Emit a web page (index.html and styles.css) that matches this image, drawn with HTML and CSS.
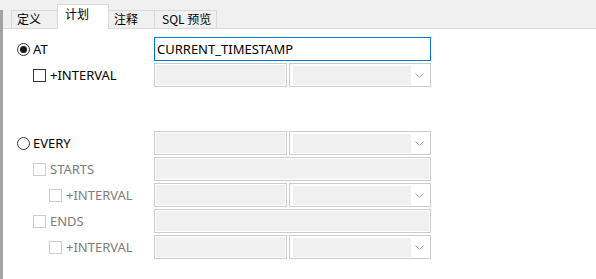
FILE: index.html
```html
<!DOCTYPE html>
<html lang="zh">
<head>
    <meta charset="UTF-8">
    <title>计划</title>
    <link rel="stylesheet" href="styles.css">
</head>
<body>
    <div class="window">
        <div class="edge"></div>
        <div class="main">
            <div class="tabs">
                <div class="tab tab-def">定义</div>
                <div class="tab tab-plan active">计划</div>
                <div class="tab tab-note">注释</div>
                <div class="tab tab-sql">SQL 预览</div>
            </div>

            <div class="form">
                <!-- AT -->
                <div class="row">
                    <div class="opt"><span class="radio checked"></span>AT</div>
                    <div class="fields">
                        <div class="text-box focused">CURRENT_TIMESTAMP</div>
                    </div>
                </div>
                <div class="row">
                    <div class="opt level1"><span class="check"></span>+INTERVAL</div>
                    <div class="fields">
                        <div class="input-off half"></div>
                        <div class="combo">
                            <div class="combo-fill"></div>
                            <div class="combo-arrow">
                                <svg width="9" height="5" viewBox="0 0 9 5"><path d="M0.5 0.5 L4.5 4.5 L8.5 0.5" fill="none" stroke="#a6a6a6" stroke-width="1"/></svg>
                            </div>
                        </div>
                    </div>
                </div>

                <!-- EVERY -->
                <div class="row section-gap">
                    <div class="opt"><span class="radio"></span>EVERY</div>
                    <div class="fields">
                        <div class="input-off half"></div>
                        <div class="combo">
                            <div class="combo-fill"></div>
                            <div class="combo-arrow">
                                <svg width="9" height="5" viewBox="0 0 9 5"><path d="M0.5 0.5 L4.5 4.5 L8.5 0.5" fill="none" stroke="#a6a6a6" stroke-width="1"/></svg>
                            </div>
                        </div>
                    </div>
                </div>
                <div class="row">
                    <div class="opt level1 disabled"><span class="check"></span>STARTS</div>
                    <div class="fields">
                        <div class="input-off full"></div>
                    </div>
                </div>
                <div class="row">
                    <div class="opt level2 disabled"><span class="check"></span>+INTERVAL</div>
                    <div class="fields">
                        <div class="input-off half"></div>
                        <div class="combo">
                            <div class="combo-fill"></div>
                            <div class="combo-arrow">
                                <svg width="9" height="5" viewBox="0 0 9 5"><path d="M0.5 0.5 L4.5 4.5 L8.5 0.5" fill="none" stroke="#a6a6a6" stroke-width="1"/></svg>
                            </div>
                        </div>
                    </div>
                </div>
                <div class="row">
                    <div class="opt level1 disabled"><span class="check"></span>ENDS</div>
                    <div class="fields">
                        <div class="input-off full"></div>
                    </div>
                </div>
                <div class="row">
                    <div class="opt level2 disabled"><span class="check"></span>+INTERVAL</div>
                    <div class="fields">
                        <div class="input-off half"></div>
                        <div class="combo">
                            <div class="combo-fill"></div>
                            <div class="combo-arrow">
                                <svg width="9" height="5" viewBox="0 0 9 5"><path d="M0.5 0.5 L4.5 4.5 L8.5 0.5" fill="none" stroke="#a6a6a6" stroke-width="1"/></svg>
                            </div>
                        </div>
                    </div>
                </div>
            </div>
        </div>
    </div>
</body>
</html>
```

FILE: styles.css
```css
* {
    box-sizing: border-box;
}
body {
    margin: 0;
    background: #fff;
    font-family: "Noto Sans", "Noto Sans CJK SC", sans-serif;
    font-size: 12px;
    color: #000;
}
.window {
    display: flex;
    width: 596px;
    height: 279px;
    overflow: hidden;
}
.edge {
    width: 3px;
    flex: none;
    background: linear-gradient(#f0f0f0 10px, #a3a3a3 10px);
}
.main {
    flex: 1;
}

/* tab strip */
.tabs {
    display: flex;
    align-items: flex-end;
    height: 29px;
    padding-left: 8px;
    background: #f0f0f0;
    border-bottom: 1px solid #d9d9d9;
}
.tab {
    height: 18px;
    line-height: 16px;
    padding-left: 5px;
    border: 1px solid #d9d9d9;
    border-bottom: none;
    background: #f0f0f0;
    white-space: nowrap;
    font-family: "Noto Sans CJK SC", sans-serif;
}
.tab + .tab {
    margin-left: -1px;
}
.tab-def { width: 47px; }
.tab-plan { width: 52px; }
.tab-note { width: 47px; }
.tab-sql { width: 63px; padding-left: 7px; }
.tab.active {
    height: 25px;
    padding-top: 1px;
    padding-left: 7px;
    margin-bottom: -1px;
    background: #fff;
    position: relative;
}

/* form */
.form {
    display: flex;
    flex-direction: column;
    gap: 2px;
    padding: 8px 0 0 14px;
    font-size: 13px;
}
.row {
    display: flex;
    height: 24px;
}
.section-gap {
    margin-top: 42px;
}
.opt {
    width: 137px;
    display: flex;
    align-items: center;
    gap: 3px;
    white-space: nowrap;
}
.opt.level1 {
    padding-left: 16px;
    gap: 4px;
}
.opt.level2 {
    padding-left: 32px;
    gap: 4px;
}
.opt.disabled {
    color: #7d7d7d;
}
.radio {
    width: 13px;
    height: 13px;
    flex: none;
    border: 1px solid #333;
    border-radius: 50%;
    display: flex;
    align-items: center;
    justify-content: center;
}
.radio.checked::after {
    content: "";
    width: 7px;
    height: 7px;
    border-radius: 50%;
    background: #1a1a1a;
}
.check {
    width: 13px;
    height: 13px;
    flex: none;
    border: 1px solid #333;
    background: #fff;
}
.disabled .check {
    border-color: #cccccc;
}

.fields {
    display: flex;
    gap: 2px;
    width: 277px;
}
.text-box {
    width: 277px;
    height: 24px;
    border: 1px solid #0078d7;
    padding-left: 2px;
    line-height: 22px;
    white-space: nowrap;
}
.input-off {
    height: 24px;
    border: 1px solid #cccccc;
    box-shadow: inset 0 0 0 1px #fff;
    background: #f0f0f0;
}
.input-off.half {
    width: 133px;
}
.input-off.full {
    width: 277px;
}
.combo {
    width: 142px;
    height: 24px;
    display: flex;
    border: 1px solid #cccccc;
    background: #fff;
    padding: 2px 0 1px 3px;
}
.combo-fill {
    flex: 1;
    background: #f0f0f0;
}
.combo-arrow {
    width: 19px;
    display: flex;
    align-items: center;
    justify-content: center;
    padding-right: 2px;
}
```
